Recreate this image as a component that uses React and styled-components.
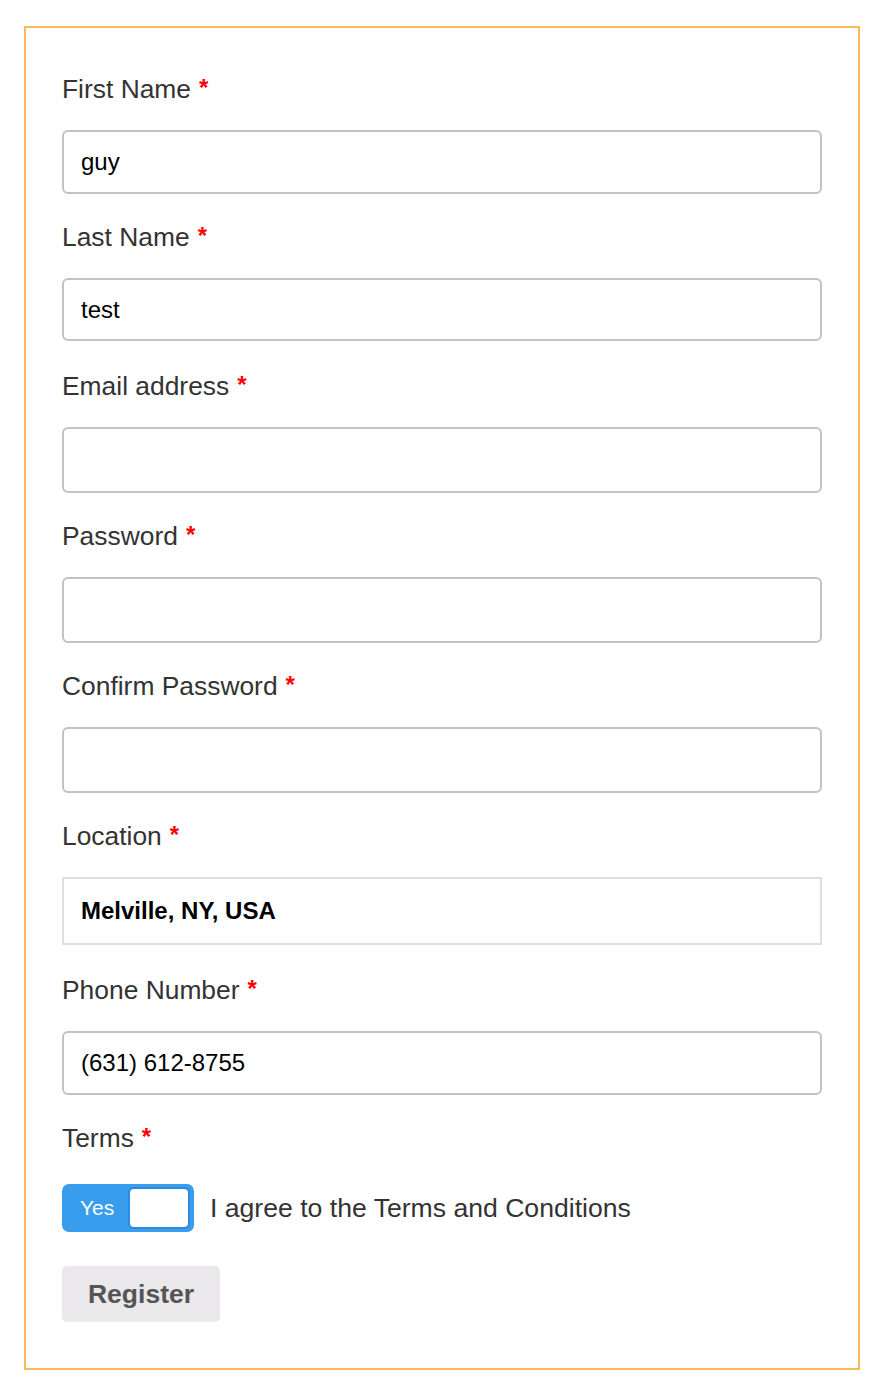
import styled, { createGlobalStyle } from "styled-components";

const GlobalStyle = createGlobalStyle`
  body {
    margin: 0;
    background: #fff;
    font-family: "Liberation Sans", Arial, sans-serif;
  }
`;

const Page = styled.div`
  padding: 26px 22px 12px 24px;
`;

const Frame = styled.form`
  border: 2px solid #f7bc55;
  width: 836px;
  box-sizing: border-box;
  padding: 44px 36px 46px 36px;
  display: flex;
  flex-direction: column;
`;

const Group = styled.div`
  display: flex;
  flex-direction: column;
  margin-bottom: ${(props) => props.gap ?? 26}px;
`;

const Label = styled.label`
  font-size: 26.4px;
  line-height: 34px;
  color: #333;
  margin-bottom: 24px;
`;

const Star = styled.span`
  color: #f00;
  font-size: 24px;
  font-weight: 700;
  margin-left: 8px;
  vertical-align: top;
  line-height: 32px;
`;

const Input = styled.input`
  box-sizing: border-box;
  width: 760px;
  height: ${(props) => props.h || 64}px;
  border: 2px solid ${(props) => (props.flat ? "#dedede" : "#c2c2c2")};
  border-radius: ${(props) => (props.flat ? 0 : 6)}px;
  padding: 0 17px;
  font-family: "Liberation Sans", Arial, sans-serif;
  font-size: 24px;
  font-weight: ${(props) => (props.flat ? 700 : 400)};
  color: #000;
  background: #fff;
  outline: none;
`;

const TermsRow = styled.div`
  display: flex;
  align-items: center;
  gap: 16px;
  margin-bottom: 34px;
`;

const Toggle = styled.div`
  width: 132px;
  height: 48px;
  box-sizing: border-box;
  background: #399ded;
  border-radius: 7px;
  display: flex;
  align-items: center;
  padding: 0 4px 0 18px;
  justify-content: space-between;
`;

const ToggleText = styled.span`
  color: #fff;
  font-size: 21px;
`;

const Knob = styled.span`
  width: 62px;
  height: 42px;
  box-sizing: border-box;
  background: #fff;
  border: 2px solid #2a8ae0;
  border-radius: 6px;
`;

const AgreeText = styled.span`
  font-size: 26.6px;
  color: #333;
`;

const Button = styled.button`
  align-self: flex-start;
  width: 158px;
  height: 56px;
  border: none;
  border-radius: 5px;
  background: #eae8eb;
  color: #555;
  font-family: "Liberation Sans", Arial, sans-serif;
  font-size: 26.5px;
  font-weight: 700;
  cursor: pointer;
`;

const fields = [
  { label: "First Name", value: "guy", h: 64, gap: 26 },
  { label: "Last Name", value: "test", h: 63, gap: 28 },
  { label: "Email address", value: "", h: 66, gap: 26 },
  { label: "Password", value: "", h: 66, gap: 26 },
  { label: "Confirm Password", value: "", h: 66, gap: 26 },
  { label: "Location", value: "Melville, NY, USA", h: 68, gap: 28, flat: true },
  { label: "Phone Number", value: "(631) 612-8755", h: 64, gap: 26 },
];

export default function App() {
  return (
    <Page>
      <GlobalStyle />
      <Frame onSubmit={(e) => e.preventDefault()}>
        {fields.map((f) => (
          <Group key={f.label} gap={f.gap}>
            <Label>
              {f.label}
              <Star>*</Star>
            </Label>
            <Input defaultValue={f.value} h={f.h} flat={f.flat ? 1 : 0} />
          </Group>
        ))}
        <Group gap={5}>
          <Label>
            Terms
            <Star>*</Star>
          </Label>
        </Group>
        <TermsRow>
          <Toggle>
            <ToggleText>Yes</ToggleText>
            <Knob />
          </Toggle>
          <AgreeText>I agree to the Terms and Conditions</AgreeText>
        </TermsRow>
        <Button type="submit">Register</Button>
      </Frame>
    </Page>
  );
}
